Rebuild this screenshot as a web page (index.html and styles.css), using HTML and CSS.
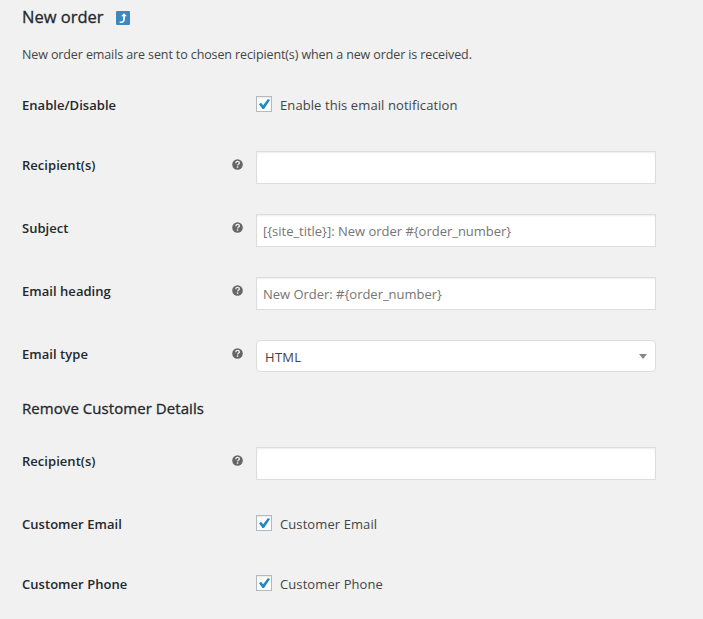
FILE: index.html
```
<!DOCTYPE html>
<html lang="en">
<head>
<meta charset="utf-8">
<title>New order</title>
<link rel="stylesheet" href="styles.css">
</head>
<body>
<svg class="defs" width="0" height="0" aria-hidden="true">
  <symbol id="help" viewBox="0 0 11 11">
    <circle cx="5.5" cy="5.5" r="5.3" fill="#666"/>
    <path d="M3.7 4.2C3.8 2.8 4.6 2.4 5.6 2.4C6.8 2.4 7.4 3.1 7.4 3.9C7.4 5.1 5.7 5.1 5.6 6.5" fill="none" stroke="#f1f1f1" stroke-width="1.3"/>
    <rect x="4.8" y="7.4" width="1.5" height="1.4" fill="#f1f1f1"/>
  </symbol>
  <symbol id="check" viewBox="0 0 14 14">
    <path d="M2 7.3L4 5.7L6.2 8.3L10.9 2L13 3L7 12H5.5Z" fill="#1e8cbe"/>
  </symbol>
</svg>
<main class="settings">
  <h2 class="title"><span class="title-text">New order</span>
    <svg class="back" viewBox="0 0 14 14"><rect width="14" height="14" rx="1.2" fill="#3b88c3"/><path d="M8 2.2L10.9 5.3H8.9V8.2C8.9 10.5 7.5 11.9 5.2 11.9H3.7V10.5H5C6.5 10.5 7.1 9.7 7.1 8.2V5.3H5.1Z" fill="#fff"/></svg>
  </h2>
  <p class="description">New order emails are sent to chosen recipient(s) when a new order is received.</p>
  <section class="form">
    <div class="row row-check"><div class="label"><span>Enable/Disable</span></div>
      <label class="option"><span class="box"><svg><use href="#check"/></svg></span><span>Enable this email notification</span></label></div>
    <div class="row"><div class="label"><span>Recipient(s)</span><svg class="help"><use href="#help"/></svg></div><div class="field"></div></div>
    <div class="row"><div class="label"><span>Subject</span><svg class="help"><use href="#help"/></svg></div><div class="field"><span>[{site_title}]: New order #{order_number}</span></div></div>
    <div class="row"><div class="label"><span>Email heading</span><svg class="help"><use href="#help"/></svg></div><div class="field"><span>New Order: #{order_number}</span></div></div>
    <div class="row row-select"><div class="label"><span>Email type</span><svg class="help"><use href="#help"/></svg></div><div class="field select"><span>HTML</span><span class="arrow"></span></div></div>
  </section>
  <h3 class="subtitle">Remove Customer Details</h3>
  <section class="form">
    <div class="row"><div class="label"><span>Recipient(s)</span><svg class="help"><use href="#help"/></svg></div><div class="field"></div></div>
    <div class="row row-check"><div class="label"><span>Customer Email</span></div>
      <label class="option"><span class="box"><svg><use href="#check"/></svg></span><span>Customer Email</span></label></div>
    <div class="row row-check"><div class="label"><span>Customer Phone</span></div>
      <label class="option"><span class="box"><svg><use href="#check"/></svg></span><span>Customer Phone</span></label></div>
  </section>
</main>
</body>
</html>
```
FILE: styles.css
```
* { box-sizing: border-box; }
body {
  margin: 0;
  height: 619px;
  overflow: hidden;
  background: #f1f1f1;
  color: #444;
  font: 13px/20px "Open Sans", "Noto Sans", sans-serif;
}
.defs { display: block; height: 0; }
.settings { padding-left: 22px; }
span { white-space: nowrap; }
.title {
  display: flex;
  align-items: center;
  gap: 13px;
  height: 36px;
  margin: 0;
  color: #23282d;
  font-size: 16.5px;
  font-weight: 500;
  -webkit-text-stroke: 0.3px #23282d;
}
.title-text { width: 81px; margin-top: -2px; }
.back { width: 14px; height: 14px; }
.description { height: 40px; margin: 0; padding-top: 9px; font-size: 12.5px; letter-spacing: -0.11px; }
.row {
  display: grid;
  grid-template-columns: 222px 400px;
  column-gap: 12px;
  height: 63px;
}
.row-check { height: 60px; }
.row-select { height: 62px; }
.label {
  display: flex;
  justify-content: space-between;
  align-items: flex-start;
  padding-top: 19px;
  color: #23282d;
  font-weight: 600;
  letter-spacing: 0.04px;
}
.help { width: 11px; height: 11px; margin: 4px 1px 0 0; }
.option { display: flex; align-items: flex-start; gap: 8px; padding-top: 19px; letter-spacing: 0.09px; }
.box { width: 16px; height: 16px; margin-top: 1px; border: 1px solid #b4b9be; background: #fff; box-shadow: inset 0 1px 2px rgba(0,0,0,.1); }
.box svg { display: block; width: 14px; height: 14px; }
.field {
  display: flex;
  align-items: center;
  height: 33px;
  margin-top: 15px;
  padding: 1px 6px 0;
  border: 1px solid #ddd;
  background: #fff;
  color: #757575;
  box-shadow: inset 0 1px 2px rgba(0,0,0,.07);
  letter-spacing: -0.02px;
}
.select { justify-content: space-between; height: 32px; padding: 2px 8px 0; border-radius: 4px; color: #444; box-shadow: none; letter-spacing: 0.3px; }
.arrow { margin-top: -2px; border: 4px solid transparent; border-top: 5px solid #888; border-bottom: 0; }
.subtitle {
  height: 45px;
  margin: 0;
  padding-top: 11px;
  color: #23282d;
  font-size: 15px;
  font-weight: 500;
  letter-spacing: 0.06px;
  -webkit-text-stroke: 0.3px #23282d;
}
```
